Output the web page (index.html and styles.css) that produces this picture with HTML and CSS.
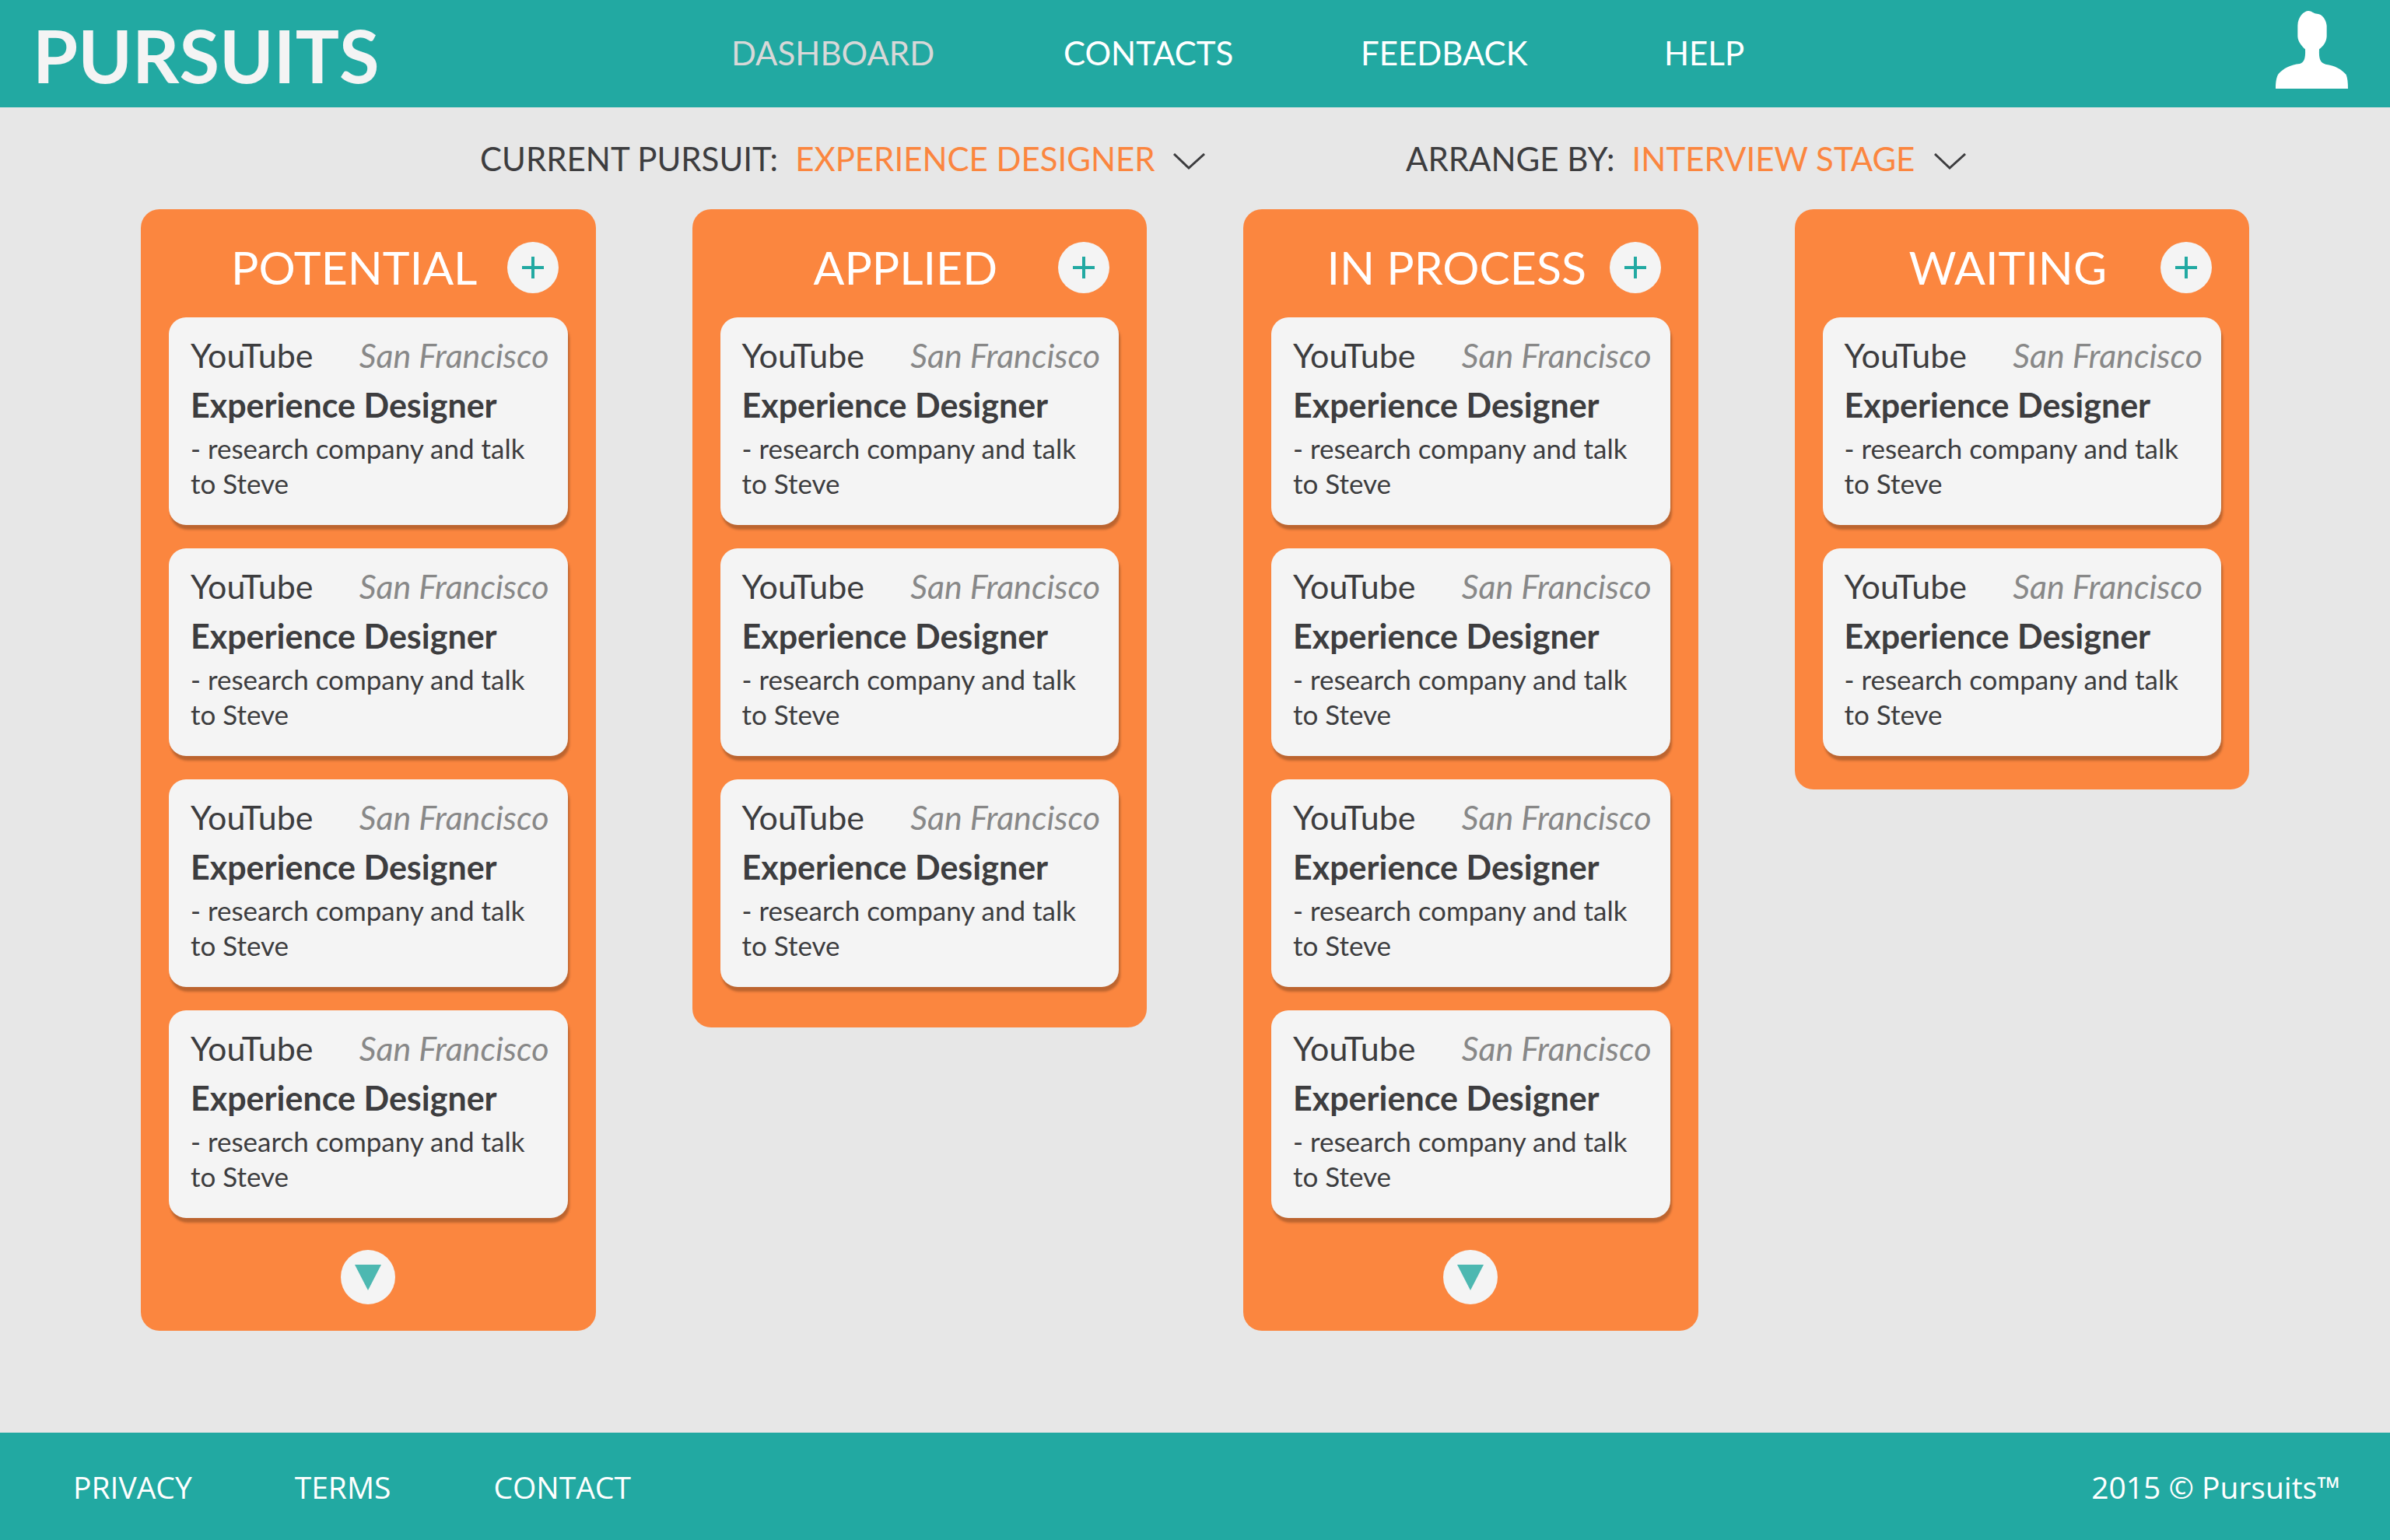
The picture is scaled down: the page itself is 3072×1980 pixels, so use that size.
FILE: index.html
```html
<!DOCTYPE html>
<html lang="en">
<head>
<meta charset="utf-8">
<title>Pursuits</title>
<link rel="stylesheet" href="styles.css">
</head>
<body>
<header class="site-header">
  <a class="logo" href="#">PURSUITS</a>
  <nav class="main-nav" aria-label="Main">
    <a class="nav-link nav-link-current" href="#" aria-current="page">DASHBOARD</a>
    <a class="nav-link" href="#">CONTACTS</a>
    <a class="nav-link" href="#">FEEDBACK</a>
    <a class="nav-link" href="#">HELP</a>
  </nav>
  <a class="account" href="#" aria-label="Account">
    <svg class="avatar" viewBox="75 42 279 300" aria-hidden="true"><path d="M75 342C75 316 78 297 86 285C104 264 134 249 168 246C183 241 191 230 189 190C174 176 161 160 160 140V98C161 66 183 42 202 42C214 42 219 52 235 53C256 54 271 79 272 100V140C271 161 259 178 243 190C241 230 248 243 268 248C303 252 331 268 347 288C352 300 354 318 354 342Z"/></svg>
  </a>
</header>
<main class="dashboard">
  <form class="filters">
    <div class="filter">
      <label class="filter-label" for="pursuit">CURRENT PURSUIT:</label>
      <span class="picker">
        <select class="picker-select" id="pursuit"><option>EXPERIENCE DESIGNER</option></select>
        <svg class="picker-chevron" viewBox="0 0 41 22" aria-hidden="true"><path d="M1 1L20 19L40 1"/></svg>
      </span>
    </div>
    <div class="filter">
      <label class="filter-label" for="arrange">ARRANGE BY:</label>
      <span class="picker">
        <select class="picker-select" id="arrange"><option>INTERVIEW STAGE</option></select>
        <svg class="picker-chevron" viewBox="0 0 41 22" aria-hidden="true"><path d="M1 1L20 19L40 1"/></svg>
      </span>
    </div>
  </form>
  <div class="board">
    <section class="column column-scrolling">
      <header class="column-header">
        <h2 class="column-title">POTENTIAL</h2>
        <button class="add" type="button" aria-label="Add to Potential"><svg class="plus" viewBox="0 0 28 28" aria-hidden="true"><path d="M14 0V28M0 14H28"/></svg></button>
      </header>
      <article class="card"><div class="card-top"><span>YouTube</span><em class="place">San Francisco</em></div><h3 class="role">Experience Designer</h3><p class="note">- research company and talk<br>to Steve</p></article>
      <article class="card"><div class="card-top"><span>YouTube</span><em class="place">San Francisco</em></div><h3 class="role">Experience Designer</h3><p class="note">- research company and talk<br>to Steve</p></article>
      <article class="card"><div class="card-top"><span>YouTube</span><em class="place">San Francisco</em></div><h3 class="role">Experience Designer</h3><p class="note">- research company and talk<br>to Steve</p></article>
      <article class="card"><div class="card-top"><span>YouTube</span><em class="place">San Francisco</em></div><h3 class="role">Experience Designer</h3><p class="note">- research company and talk<br>to Steve</p></article>
      <button class="more" type="button" aria-label="Show more"><svg class="triangle" viewBox="0 0 34 33" aria-hidden="true"><path d="M0 0H34L17 33Z"/></svg></button>
    </section>
    <section class="column column-roomy">
      <header class="column-header">
        <h2 class="column-title">APPLIED</h2>
        <button class="add" type="button" aria-label="Add to Applied"><svg class="plus" viewBox="0 0 28 28" aria-hidden="true"><path d="M14 0V28M0 14H28"/></svg></button>
      </header>
      <article class="card"><div class="card-top"><span>YouTube</span><em class="place">San Francisco</em></div><h3 class="role">Experience Designer</h3><p class="note">- research company and talk<br>to Steve</p></article>
      <article class="card"><div class="card-top"><span>YouTube</span><em class="place">San Francisco</em></div><h3 class="role">Experience Designer</h3><p class="note">- research company and talk<br>to Steve</p></article>
      <article class="card"><div class="card-top"><span>YouTube</span><em class="place">San Francisco</em></div><h3 class="role">Experience Designer</h3><p class="note">- research company and talk<br>to Steve</p></article>
    </section>
    <section class="column column-scrolling">
      <header class="column-header">
        <h2 class="column-title">IN PROCESS</h2>
        <button class="add" type="button" aria-label="Add to In Process"><svg class="plus" viewBox="0 0 28 28" aria-hidden="true"><path d="M14 0V28M0 14H28"/></svg></button>
      </header>
      <article class="card"><div class="card-top"><span>YouTube</span><em class="place">San Francisco</em></div><h3 class="role">Experience Designer</h3><p class="note">- research company and talk<br>to Steve</p></article>
      <article class="card"><div class="card-top"><span>YouTube</span><em class="place">San Francisco</em></div><h3 class="role">Experience Designer</h3><p class="note">- research company and talk<br>to Steve</p></article>
      <article class="card"><div class="card-top"><span>YouTube</span><em class="place">San Francisco</em></div><h3 class="role">Experience Designer</h3><p class="note">- research company and talk<br>to Steve</p></article>
      <article class="card"><div class="card-top"><span>YouTube</span><em class="place">San Francisco</em></div><h3 class="role">Experience Designer</h3><p class="note">- research company and talk<br>to Steve</p></article>
      <button class="more" type="button" aria-label="Show more"><svg class="triangle" viewBox="0 0 34 33" aria-hidden="true"><path d="M0 0H34L17 33Z"/></svg></button>
    </section>
    <section class="column">
      <header class="column-header">
        <h2 class="column-title">WAITING</h2>
        <button class="add" type="button" aria-label="Add to Waiting"><svg class="plus" viewBox="0 0 28 28" aria-hidden="true"><path d="M14 0V28M0 14H28"/></svg></button>
      </header>
      <article class="card"><div class="card-top"><span>YouTube</span><em class="place">San Francisco</em></div><h3 class="role">Experience Designer</h3><p class="note">- research company and talk<br>to Steve</p></article>
      <article class="card"><div class="card-top"><span>YouTube</span><em class="place">San Francisco</em></div><h3 class="role">Experience Designer</h3><p class="note">- research company and talk<br>to Steve</p></article>
    </section>
  </div>
</main>
<footer class="site-footer">
  <nav class="footer-nav" aria-label="Footer">
    <a class="footer-link" href="#">PRIVACY</a>
    <a class="footer-link" href="#">TERMS</a>
    <a class="footer-link" href="#">CONTACT</a>
  </nav>
  <span>2015 © Pursuits™</span>
</footer>
</body>
</html>
```
FILE: styles.css
```css
:root {
  --teal: #22a9a2;
  --orange: #fb863f;
  --paper: #f4f4f4;
  --ink: #3d3d3f;
}

* {
  box-sizing: border-box;
}

body {
  margin: 0;
  min-height: 100vh;
  display: flex;
  flex-direction: column;
  background: #e7e7e7;
  color: var(--ink);
  font-family: Lato, "Open Sans", sans-serif;
  font-size: 42px;
}

a {
  color: inherit;
  text-decoration: none;
}

button {
  border: 0;
  padding: 0;
  display: grid;
  place-items: center;
  border-radius: 50%;
  background: var(--paper);
  cursor: pointer;
}

/* Header */
.site-header {
  height: 138px;
  padding: 0 54px 0 42px;
  display: flex;
  align-items: center;
  background: var(--teal);
  color: #fff;
}

.logo {
  flex: 0 0 898px;
  padding-top: 4px;
  color: var(--paper);
  font-size: 94px;
  line-height: 134px;
  font-weight: 700;
}

.main-nav {
  flex: 1;
  padding-bottom: 2px;
  display: grid;
  grid-template-columns: 427px 382px 390px auto;
  font-size: 42px;
}

.nav-link-current {
  color: #d8d8d8;
}

.account {
  align-self: flex-start;
  padding-top: 14px;
}

.avatar {
  display: block;
  width: 93px;
  height: 100px;
  fill: #fff;
}

/* Filters */
.filters {
  height: 131px;
  padding-left: 617px;
  display: grid;
  grid-template-columns: 1190px auto;
  align-items: center;
}

.filter {
  display: flex;
  align-items: center;
  gap: 22px;
}

.picker {
  display: grid;
  align-items: center;
}

.picker-select,
.picker-chevron {
  grid-area: 1 / 1;
}

.picker-select {
  appearance: none;
  border: 0;
  margin: 0;
  padding: 0 64px 0 0;
  background: transparent;
  color: var(--orange);
  font: inherit;
}

.picker-chevron {
  justify-self: end;
  width: 41px;
  height: 22px;
  margin-top: 8px;
  fill: none;
  stroke: var(--ink);
  stroke-width: 3;
  pointer-events: none;
}

/* Board */
.board {
  padding: 0 181px 130px;
  display: grid;
  grid-template-columns: repeat(4, 1fr);
  align-items: start;
  gap: 124px;
}

.column {
  padding: 0 36px 43px;
  display: flex;
  flex-direction: column;
  gap: 30px;
  border-radius: 24px;
  background: var(--orange);
}

.column-roomy {
  padding-bottom: 52px;
}

.column-scrolling {
  padding-bottom: 34px;
}

.column-header {
  height: 109px;
  padding: 40px 12px 0 42px;
  display: flex;
  align-items: center;
}

.column-title {
  flex: 1;
  margin: 0;
  color: #fff;
  font-size: 59px;
  line-height: 66px;
  font-weight: 400;
  text-align: center;
  white-space: nowrap;
}

.add {
  width: 66px;
  height: 66px;
}

.plus {
  width: 28px;
  height: 28px;
  stroke: var(--teal);
  stroke-width: 4;
}

.card {
  height: 267px;
  padding: 24px 24px 0 28px;
  border-radius: 22px;
  background: var(--paper);
  box-shadow: 2px 6px 3px rgba(0, 0, 0, 0.25);
}

.card-top {
  display: flex;
  justify-content: space-between;
  font-size: 43px;
  line-height: 50px;
}

.place {
  color: #888;
}

.role {
  margin: 0;
  padding-top: 14px;
  font-size: 43px;
  line-height: 50px;
  font-weight: 700;
}

.note {
  margin: 0;
  padding-top: 8px;
  font-size: 35px;
  line-height: 45px;
}

.more {
  width: 70px;
  height: 70px;
  margin-top: 11px;
  align-self: center;
}

.triangle {
  width: 34px;
  height: 33px;
  fill: #4db8b1;
}

/* Footer */
.site-footer {
  height: 138px;
  margin-top: auto;
  padding: 0 64px 0 94px;
  display: flex;
  align-items: center;
  justify-content: space-between;
  background: var(--teal);
  color: #fff;
  font-family: "Open Sans", "Noto Sans", sans-serif;
  font-size: 39px;
}

.footer-nav {
  display: flex;
  gap: 132px;
}
```
